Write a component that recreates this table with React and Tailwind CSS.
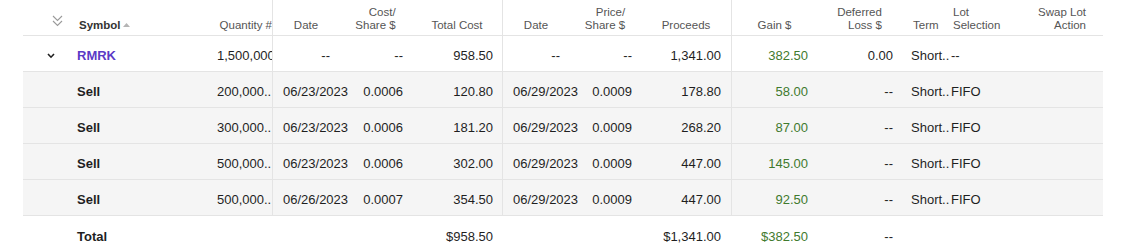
import React from "react";

const GRID =
  "grid grid-cols-[47px_135px_67px_67px_73px_90px_67px_72px_90px_86px_85px_46px_72px_83px]";
const DIV = "border-l border-[#e4e4e4]";

function DoubleChevron() {
  return (
    <svg width="11" height="12" viewBox="0 0 11 12" fill="none" stroke="#9a9a9a" strokeWidth="1.1">
      <polyline points="1,1 5.5,5.5 10,1" />
      <polyline points="1,6 5.5,10.5 10,6" />
    </svg>
  );
}

function Chevron() {
  return (
    <svg width="8" height="6" viewBox="0 0 8 6" fill="none" stroke="#1f1f1f" strokeWidth="1.6">
      <polyline points="1,1 4,4.2 7,1" />
    </svg>
  );
}

function SortArrow() {
  return (
    <svg width="7" height="4" viewBox="0 0 7 4" className="ml-[2px]">
      <polygon points="0,4 3.5,0 7,4" fill="#b5b5b5" />
    </svg>
  );
}

function Header() {
  return (
    <div className={`${GRID} h-[36px] border-b border-[#e4e4e4] text-[11.5px] leading-[12.5px] text-[#555555]`}>
      <div className="flex items-end pl-[29px] pb-[8px]">
        <DoubleChevron />
      </div>
      <div className="flex items-end pl-[9px] pb-[4px] font-bold text-[#333333]">
        <span>Symbol</span>
        <span className="pb-[4px]"><SortArrow /></span>
      </div>
      <div className="flex items-end justify-end pb-[4px] overflow-hidden whitespace-nowrap">
        <span>Quantity #</span>
      </div>
      <div className={`${DIV} flex items-end justify-center pb-[4px]`}>
        <span>Date</span>
      </div>
      <div className="flex items-end justify-center pb-[4px]">
        <span className="text-right">Cost/<br />Share $</span>
      </div>
      <div className="flex items-end justify-center pb-[4px]">
        <span>Total Cost</span>
      </div>
      <div className={`${DIV} flex items-end justify-center pb-[4px]`}>
        <span>Date</span>
      </div>
      <div className="flex items-end justify-center pb-[4px]">
        <span className="text-right">Price/<br />Share $</span>
      </div>
      <div className="flex items-end justify-center pb-[4px]">
        <span>Proceeds</span>
      </div>
      <div className={`${DIV} flex items-end justify-center pb-[4px]`}>
        <span>Gain $</span>
      </div>
      <div className="flex items-end justify-center pb-[4px]">
        <span className="text-right">Deferred<br />Loss $</span>
      </div>
      <div className="flex items-end pl-[11px] pb-[4px]">
        <span>Term</span>
      </div>
      <div className="flex items-end pl-[5px] pb-[4px]">
        <span>Lot<br />Selection</span>
      </div>
      <div className="flex items-end justify-end pr-[17px] pb-[4px]">
        <span className="text-right">Swap Lot<br />Action</span>
      </div>
    </div>
  );
}

function Row({ r, kind }) {
  const parent = kind === "parent";
  const total = kind === "total";
  const rowCls = total
    ? "bg-white"
    : parent
    ? "bg-white border-b border-[#e4e4e4]"
    : "bg-[#f5f5f5] border-b border-[#e4e4e4]";
  const dv = total ? "" : DIV;
  const cell = "flex items-center pt-[5px] whitespace-nowrap";
  return (
    <div className={`${GRID} h-[36px] text-[13px] text-[#1f1f1f] ${rowCls}`}>
      <div className={`${cell} pl-[24px]`}>{parent ? <Chevron /> : null}</div>
      <div className={`${cell} pl-[7px] font-bold ${parent ? "text-[#5b3ac6]" : "text-[#1f1f1f]"}`}>
        {r.sym}
      </div>
      <div className={`${cell} pl-[12px] overflow-hidden`}>{r.qty}</div>
      <div className={`${dv} ${cell} ${r.d1 === "--" ? "justify-end pr-[9px]" : "pl-[10px]"}`}>{r.d1}</div>
      <div className={`${cell} justify-end pr-[9px]`}>{r.cs}</div>
      <div className={`${cell} justify-end pr-[9px]`}>{r.tc}</div>
      <div className={`${dv} ${cell} ${r.d2 === "--" ? "justify-end pr-[9px]" : "pl-[10px]"}`}>{r.d2}</div>
      <div className={`${cell} justify-end pr-[9px]`}>{r.ps}</div>
      <div className={`${cell} justify-end pr-[10px]`}>{r.pr}</div>
      <div className={`${dv} ${cell} justify-end pr-[9px] text-[#3f7a2e]`}>{r.gain}</div>
      <div className={`${cell} justify-end pr-[9px]`}>{r.def}</div>
      <div className={`${cell} pl-[9px]`}>{r.term}</div>
      <div className={`${cell} pl-[3px]`}>{r.lot}</div>
      <div className={cell}></div>
    </div>
  );
}

const parent = {
  sym: "RMRK",
  qty: "1,500,000",
  d1: "--",
  cs: "--",
  tc: "958.50",
  d2: "--",
  ps: "--",
  pr: "1,341.00",
  gain: "382.50",
  def: "0.00",
  term: "Short..",
  lot: "--",
};

const lots = [
  { sym: "Sell", qty: "200,000..", d1: "06/23/2023", cs: "0.0006", tc: "120.80", d2: "06/29/2023", ps: "0.0009", pr: "178.80", gain: "58.00", def: "--", term: "Short..", lot: "FIFO" },
  { sym: "Sell", qty: "300,000..", d1: "06/23/2023", cs: "0.0006", tc: "181.20", d2: "06/29/2023", ps: "0.0009", pr: "268.20", gain: "87.00", def: "--", term: "Short..", lot: "FIFO" },
  { sym: "Sell", qty: "500,000..", d1: "06/23/2023", cs: "0.0006", tc: "302.00", d2: "06/29/2023", ps: "0.0009", pr: "447.00", gain: "145.00", def: "--", term: "Short..", lot: "FIFO" },
  { sym: "Sell", qty: "500,000..", d1: "06/26/2023", cs: "0.0007", tc: "354.50", d2: "06/29/2023", ps: "0.0009", pr: "447.00", gain: "92.50", def: "--", term: "Short..", lot: "FIFO" },
];

const totalRow = {
  sym: "Total",
  qty: "",
  d1: "",
  cs: "",
  tc: "$958.50",
  d2: "",
  ps: "",
  pr: "$1,341.00",
  gain: "$382.50",
  def: "--",
  term: "",
  lot: "",
};

export default function App() {
  return (
    <div className="w-[1136px] h-[250px] overflow-hidden bg-white font-[family-name:'Liberation_Sans',Arial,sans-serif]">
      <div className="ml-[23px] w-[1080px]">
        <Header />
        <Row r={parent} kind="parent" />
        {lots.map((l, i) => (
          <Row key={i} r={l} kind="lot" />
        ))}
        <Row r={totalRow} kind="total" />
      </div>
    </div>
  );
}
